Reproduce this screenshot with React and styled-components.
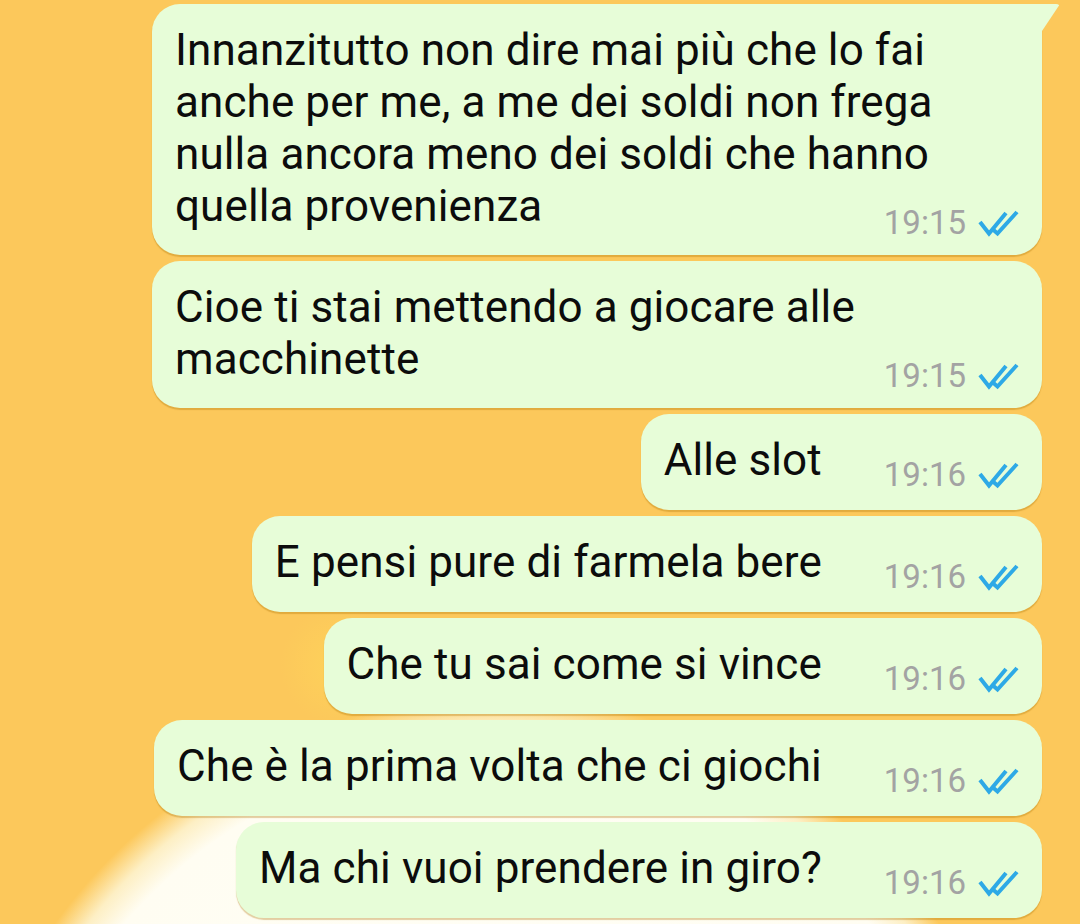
import React from 'react'
import styled, { createGlobalStyle, css } from 'styled-components'

const GlobalStyle = createGlobalStyle`
  html, body {
    margin: 0;
    padding: 0;
    width: 1080px;
    height: 924px;
    overflow: hidden;
  }

  body {
    font-family: Roboto, 'Noto Sans', Arial, sans-serif;
    background-color: #fcc85b;
    background-image:
      radial-gradient(circle 60px at 340px 665px, rgba(255, 214, 90, 0.7), rgba(255, 214, 90, 0) 60px),
      radial-gradient(
        circle 545px at 497px 1242px,
        #fffff8 0,
        #fffdf2 490px,
        #fdefc4 518px,
        #fcc85b 545px
      );
  }
`

const Chat = styled.main`
  display: flex;
  flex-direction: column;
  align-items: flex-end;
  gap: 6px;
  padding: 4px 38px 0 0;
`

const withTail = ({ $tail }) =>
  $tail &&
  css`
    border-top-right-radius: 0;

    &::after {
      content: '';
      position: absolute;
      top: 0;
      right: -18px;
      width: 20px;
      height: 30px;
      background: #e7fdd8;
      border-top-right-radius: 4px;
      clip-path: polygon(0 0, 100% 0, 0 100%);
    }
  `

const Bubble = styled.div`
  position: relative;
  display: flex;
  flex-direction: ${({ $multi }) => ($multi ? 'column' : 'row')};
  align-items: flex-end;
  max-width: 890px;
  box-sizing: border-box;
  padding: ${({ $multi }) => ($multi ? '20px 22px 17px 23px' : '20px 22px 24px 23px')};
  background: #e7fdd8;
  border-radius: 28px;
  box-shadow: 0 2px 1px rgba(176, 118, 10, 0.35);

  ${withTail};
`

const Text = styled.p`
  margin: 0;
  align-self: ${({ $multi }) => ($multi ? 'flex-start' : 'auto')};
  font-size: 44px;
  line-height: 52px;
  color: #0c0c0c;
  letter-spacing: 0.1px;
`

const Meta = styled.div`
  display: flex;
  align-items: center;
  gap: 12px;
  flex-shrink: 0;
  margin: ${({ $multi }) => ($multi ? '-24px 0 0 0' : '0 0 -4px 62px')};
`

const Time = styled.span`
  font-size: 33px;
  line-height: 30px;
  color: #a3a3a3;
`

const Ticks = styled.svg`
  display: block;
  width: 42px;
  height: 28px;
`

const DoubleTick = () => (
  <Ticks viewBox="0 0 42 28" fill="none" stroke="#2ea9e6" strokeWidth="4" strokeLinecap="butt" strokeLinejoin="miter">
    <path d="M2 13 L11 24.5 L28 4" />
    <path d="M15.5 21 L19.5 24.5 L39 3" />
  </Ticks>
)

const messages = [
  {
    text: 'Innanzitutto non dire mai più che lo fai anche per me, a me dei soldi non frega nulla ancora meno dei soldi che hanno quella provenienza',
    time: '19:15',
    multi: true,
    tail: true,
  },
  { text: 'Cioe ti stai mettendo a giocare alle macchinette', time: '19:15', multi: true },
  { text: 'Alle slot', time: '19:16' },
  { text: 'E pensi pure di farmela bere', time: '19:16' },
  { text: 'Che tu sai come si vince', time: '19:16' },
  { text: 'Che è la prima volta che ci giochi', time: '19:16' },
  { text: 'Ma chi vuoi prendere in giro?', time: '19:16' },
]

const Message = ({ text, time, multi, tail }) => (
  <Bubble $multi={multi} $tail={tail}>
    <Text $multi={multi}>{text}</Text>
    <Meta $multi={multi}>
      <Time>{time}</Time>
      <DoubleTick />
    </Meta>
  </Bubble>
)

const App = () => (
  <>
    <GlobalStyle />
    <Chat>
      {messages.map((m, i) => (
        <Message key={i} {...m} />
      ))}
    </Chat>
  </>
)

export default App
